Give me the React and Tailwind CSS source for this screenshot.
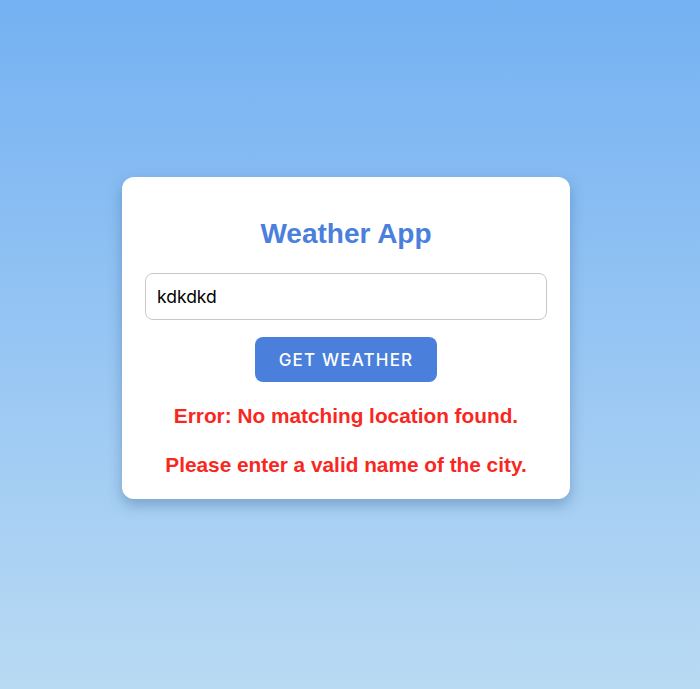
import React, { useState } from 'react';

export default function App() {
  const [city, setCity] = useState('kdkdkd');

  return (
    <div className="min-h-screen flex items-center justify-center pr-2 pb-[13px] bg-gradient-to-b from-[#74b1f2] to-[#b9daf3]">
      <div className="w-[448px] bg-white rounded-xl shadow-[0_6px_14px_rgba(40,80,130,0.35)] px-[23px] pt-[41px] pb-[22px] flex flex-col items-center">
        <h2 className="font-['Liberation_Sans',Arial,sans-serif] font-bold text-[28px] leading-[32px] text-[#4a80dc]">
          Weather App
        </h2>

        <input
          type="text"
          value={city}
          onChange={(e) => setCity(e.target.value)}
          className="mt-[23px] w-[402px] h-[47px] px-[11px] border border-[#c8c8c8] rounded-lg font-['Inter',sans-serif] text-[17.5px] text-black outline-none"
        />

        <button className="mt-[17px] w-[182px] h-[45px] pt-[3px] rounded-lg bg-[#4a80db] text-white font-['Inter',sans-serif] font-medium text-[17px] tracking-[1.2px] uppercase">
          Get Weather
        </button>

        <p className="mt-[22px] font-['Liberation_Sans',Arial,sans-serif] font-bold text-[20.8px] leading-[24px] text-[#f8281f]">
          Error: No matching location found.
        </p>
        <p className="mt-[25px] font-['Liberation_Sans',Arial,sans-serif] font-bold text-[20.8px] leading-[24px] text-[#f8281f]">
          Please enter a valid name of the city.
        </p>
      </div>
    </div>
  );
}
